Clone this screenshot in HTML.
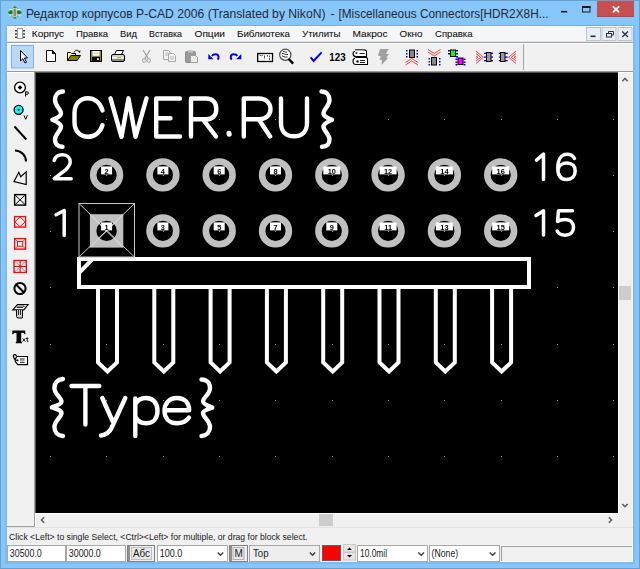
<!DOCTYPE html>
<html><head><meta charset="utf-8">
<style>
*{margin:0;padding:0}
html,body{width:640px;height:569px;overflow:hidden;background:#8cc7f7;font-family:"Liberation Sans",sans-serif}
.a{position:absolute}
</style></head><body>
<svg class="a" style="left:0;top:0" width="640" height="569" viewBox="0 0 640 569">
<rect x="0" y="0" width="640" height="569" fill="#87c6fa"/><rect x="5" y="26" width="2" height="538" fill="#7dbcf3"/><rect x="633" y="26" width="2" height="538" fill="#7dbcf3"/><rect x="5" y="562" width="630" height="2" fill="#7dbcf3"/>
<rect x="0.5" y="0.5" width="639" height="568" fill="none" stroke="#6a9ecf"/>
<rect x="7" y="25" width="626" height="1" fill="#78b0e3"/>
<path d="M14.9,5.9 L21.9,12.4 L14.9,18.9 L7.9,12.4 Z" fill="#0a8a0a"/>
<path d="M9.5,9.6 H20.3 M9.5,14.8 H20.3" stroke="#e8f8e0" stroke-width="1.2"/>
<rect x="13" y="8.3" width="3.7" height="8.5" fill="#8a8a8a" stroke="#f0d8f0" stroke-width="0.8"/>
<text x="26" y="17.5" font-size="12.4" font-family="Liberation Sans" fill="#1f2a36" textLength="299.5" lengthAdjust="spacingAndGlyphs">Редактор корпусов P-CAD 2006 (Translated by NikoN)</text>
<text x="330.5" y="17.5" font-size="12.4" font-family="Liberation Sans" fill="#1f2a36">-</text>
<text x="338.5" y="17.5" font-size="12.4" font-family="Liberation Sans" fill="#1f2a36" textLength="210" lengthAdjust="spacingAndGlyphs">[Miscellaneous Connectors[HDR2X8H...</text>
<rect x="561" y="10.9" width="6.2" height="1.6" fill="#1a1a1a"/>
<rect x="582.5" y="6.5" width="7.5" height="5.5" fill="none" stroke="#1a1a1a" stroke-width="1"/><rect x="582" y="6" width="8.5" height="2" fill="#1a1a1a"/>
<rect x="597" y="1" width="37" height="16" fill="#c74f4f"/><rect x="597" y="16" width="37" height="1" fill="#c04040"/>
<path d="M612.8,6.4 L619.2,12.4 M619.2,6.4 L612.8,12.4" stroke="#fff" stroke-width="1.7"/>
<rect x="7" y="26" width="626" height="536" fill="#f0f0f0"/>
<rect x="7" y="26" width="626" height="1" fill="#ffffff"/>
<rect x="7" y="27" width="626" height="14" fill="#f5f6f8"/>
<rect x="7" y="41" width="626" height="1" fill="#e4e5e8"/>
<rect x="17.5" y="28.5" width="5" height="10" fill="#fafafa" stroke="#9a9a9a"/>
<path d="M15,30h2v1.5h-2zM15,33.2h2v1.5h-2zM15,36.4h2v1.5h-2zM23,30h2v1.5h-2zM23,33.2h2v1.5h-2zM23,36.4h2v1.5h-2z" fill="#404040"/>
<text x="31.8" y="36.8" font-size="9.8" font-family="Liberation Sans" fill="#101010" stroke="#101010" stroke-width="0.08" textLength="32.3" lengthAdjust="spacingAndGlyphs">Корпус</text>
<text x="76" y="36.8" font-size="9.8" font-family="Liberation Sans" fill="#101010" stroke="#101010" stroke-width="0.08" textLength="32" lengthAdjust="spacingAndGlyphs">Правка</text>
<text x="120" y="36.8" font-size="9.8" font-family="Liberation Sans" fill="#101010" stroke="#101010" stroke-width="0.08" textLength="17" lengthAdjust="spacingAndGlyphs">Вид</text>
<text x="149" y="36.8" font-size="9.8" font-family="Liberation Sans" fill="#101010" stroke="#101010" stroke-width="0.08" textLength="33" lengthAdjust="spacingAndGlyphs">Вставка</text>
<text x="194.5" y="36.8" font-size="9.8" font-family="Liberation Sans" fill="#101010" stroke="#101010" stroke-width="0.08" textLength="30.5" lengthAdjust="spacingAndGlyphs">Опции</text>
<text x="237" y="36.8" font-size="9.8" font-family="Liberation Sans" fill="#101010" stroke="#101010" stroke-width="0.08" textLength="53" lengthAdjust="spacingAndGlyphs">Библиотека</text>
<text x="302" y="36.8" font-size="9.8" font-family="Liberation Sans" fill="#101010" stroke="#101010" stroke-width="0.08" textLength="38.5" lengthAdjust="spacingAndGlyphs">Утилиты</text>
<text x="352.5" y="36.8" font-size="9.8" font-family="Liberation Sans" fill="#101010" stroke="#101010" stroke-width="0.08" textLength="35" lengthAdjust="spacingAndGlyphs">Макрос</text>
<text x="399.5" y="36.8" font-size="9.8" font-family="Liberation Sans" fill="#101010" stroke="#101010" stroke-width="0.08" textLength="23" lengthAdjust="spacingAndGlyphs">Окно</text>
<text x="435" y="36.8" font-size="9.8" font-family="Liberation Sans" fill="#101010" stroke="#101010" stroke-width="0.08" textLength="37.5" lengthAdjust="spacingAndGlyphs">Справка</text>
<rect x="586.5" y="27.5" width="14" height="13" fill="#e6eef7" stroke="#bdc3ca"/>
<rect x="602" y="27.5" width="14" height="13" fill="#e6eef7" stroke="#bdc3ca"/>
<rect x="618" y="27.5" width="14" height="13" fill="#e6eef7" stroke="#bdc3ca"/>
<rect x="590.5" y="35.5" width="5" height="1.6" fill="#303030"/>
<rect x="606.5" y="33.5" width="5" height="3.5" fill="none" stroke="#303030"/><path d="M608.5,33 V31.5 H613.5 V35 H612" fill="none" stroke="#303030"/>
<path d="M622.2,31.6 L628,37 M628,31.6 L622.2,37" stroke="#303030" stroke-width="1.3"/>
<rect x="7" y="42" width="626" height="1" fill="#a0a0a0"/>
<rect x="7" y="43" width="626" height="1" fill="#ffffff"/>
<rect x="7" y="71" width="626" height="1" fill="#9a9a9a"/>
<rect x="523" y="44" width="1.5" height="26" fill="#a8a8a8"/><rect x="524.5" y="44" width="1" height="26" fill="#ffffff"/>
<rect x="11.5" y="45.5" width="22" height="22.5" fill="#b9d8f5" stroke="#7db3ea"/>
<path d="M20.5,50.5 V61 L22.8,58.8 L25,63 L26.5,62.2 L24.4,58 H27.5 Z" fill="#fff" stroke="#000" stroke-width="1"/>
<path d="M46.5,50.5 H52.5 L55.5,53.5 V61.5 H46.5 Z" fill="#fff" stroke="#000"/><path d="M52.5,50.5 V53.5 H55.5 Z" fill="#000" stroke="#000"/>
<path d="M67.5,60.5 V52.5 H70.5 L71.5,53.5 H75.5 V55.5" fill="#ffff80" stroke="#000"/>
<path d="M67.5,60.5 L70.8,55.5 H80.5 L77.2,60.5 Z" fill="#808000" stroke="#000"/>
<path d="M74,52.5 C75,50 78,49.5 79,51.5" fill="none" stroke="#000"/><path d="M78,51.5 L80.5,50.5 L80,53 Z" fill="#000"/>
<rect x="90" y="50" width="12" height="12" fill="#000"/><rect x="91" y="51" width="10" height="10" fill="#8a8a00"/><rect x="92.5" y="51" width="7" height="4.8" fill="#fff"/><rect x="93.5" y="52.5" width="5" height="1.8" fill="#d8d8d8"/><rect x="92" y="57" width="8" height="4" fill="#000"/><rect x="97" y="58.3" width="1.8" height="1.8" fill="#fff"/>
<path d="M114.5,54.5 L116.5,50.5 H123.5 L121.5,54.5 Z" fill="#fff" stroke="#000"/>
<rect x="111.5" y="54.5" width="13" height="7" rx="1.5" fill="#d0d0d0" stroke="#000"/>
<rect x="112" y="57" width="12" height="1.5" fill="#fff"/><rect x="117" y="57" width="4" height="1.5" fill="#c8c800"/><rect x="112" y="59.5" width="12" height="1" fill="#404040"/>
<path d="M143,50 L148.5,59 M150,50 L144.5,59" stroke="#a0a0a0" stroke-width="1.2"/><circle cx="144.3" cy="60.5" r="1.8" fill="none" stroke="#a0a0a0"/><circle cx="148.7" cy="60.5" r="1.8" fill="none" stroke="#a0a0a0"/>
<path d="M163.5,50.5 H168.5 L170,52 V59.5 H163.5 Z" fill="#f4f4f4" stroke="#a8a8a8"/><path d="M168.5,53.5 H173.5 L175.5,55.5 V61.5 H168.5 Z" fill="#f4f4f4" stroke="#a8a8a8"/><path d="M170,57h4M170,59h4M165,53h3M165,55h3" stroke="#b8b8b8"/>
<rect x="185.5" y="51.5" width="10" height="11" rx="1" fill="#9a9a9a" stroke="#8a8a8a"/><rect x="188" y="50" width="5" height="2.5" fill="#c8c8c8"/><path d="M190.5,55.5 H195.5 L197.5,57.5 V62.5 H190.5 Z" fill="#ececec" stroke="#9a9a9a"/>
<path d="M212,56 C213.5,53.8 217.8,53.5 218.5,56.5 C218.8,58 218.2,59 217.5,59.5" fill="none" stroke="#0000ff" stroke-width="2"/><path d="M208.3,54 L208.3,59.3 L213.5,59.3 Z" fill="#0000ff"/>
<path d="M237.3,56 C235.8,53.8 231.5,53.5 230.8,56.5 C230.5,58 231.1,59 231.8,59.5" fill="none" stroke="#0000ff" stroke-width="2"/><path d="M241.3,54 L241.3,59.3 L236.1,59.3 Z" fill="#0000ff"/>
<rect x="257.7" y="53.5" width="14.8" height="8" fill="#fff" stroke="#000" stroke-width="1.3"/><path d="M259.5,55 L261.5,55.8 L263,55 M264.5,55.5v3 M267.5,55v1.5 M269.5,55.5v1.5 M270,57.5 L269,59 L270,60" fill="none" stroke="#404040" stroke-width="0.9"/>
<circle cx="285.3" cy="54.8" r="5.6" fill="#fff" stroke="#484848" stroke-width="1.2"/><path d="M283.2,51.5 C284.5,51 285.5,52.5 287,52.2 M282,53.5 C283.5,53 284.5,55 288,54.5 M282,55.8 C283.5,56 284,57.5 287.5,57" fill="none" stroke="#303030" stroke-width="1"/><path d="M288.6,58.8 L293.2,63.6" stroke="#000" stroke-width="2.4"/>
<path d="M310.6,57.3 L313.6,61 L321.6,52.4" fill="none" stroke="#0000ff" stroke-width="2"/>
<text x="329.3" y="60.6" font-size="10.6" font-weight="bold" font-family="Liberation Sans" fill="#000" textLength="16.3" lengthAdjust="spacingAndGlyphs">123</text>
<path d="M355.5,49.5 H364.5 L366.5,51 V56.5 H356 C354,56.5 353,55 353,53.5 C353,52 354,51.5 355,51.5" fill="#fff" stroke="#000" stroke-width="1.1"/><rect x="355" y="49" width="10" height="1.5" fill="#505050"/>
<path d="M356,57.5 H366.5 L367.5,58.5 V64.5 H356 C354,64.5 353,63 353,61 C353,59.5 354,58.5 355,58.5" fill="#fff" stroke="#000" stroke-width="1.1"/>
<path d="M359.5,53.5h5 M360,60.5h5 M360,62.5h5" stroke="#202020" stroke-width="1"/><circle cx="356.5" cy="53" r="1" fill="#303030"/><circle cx="357.5" cy="61.5" r="1.3" fill="#202020"/><path d="M354,56.5 C355,57 356,57.5 358,57.5" fill="none" stroke="#000" stroke-width="1"/>
<path d="M380.2,49.1 L388.9,49.1 L385.8,53.5 L388.9,54.2 L386.3,57.6 L388.2,58 L381.5,65 L382,60.2 L379.4,59.6 L381,56.6 L377.9,55.4 Z" fill="#a0a0a0"/>
<rect x="409.5" y="50" width="5" height="7.5" fill="#888" stroke="#000"/>
<path d="M406,50h1.5v1.5h-1.5zM406,53h1.5v1.5h-1.5zM406,56h1.5v1.5h-1.5zM416.5,50h1.5v1.5h-1.5zM416.5,53h1.5v1.5h-1.5zM416.5,56h1.5v1.5h-1.5z" fill="#0000ff"/>
<path d="M405.5,62.5 L411.8,58.5 L418,62.5 M405.5,65 L411.8,61 L418,65" fill="none" stroke="#ff4040" stroke-width="1"/>
<path d="M428,49.5 L434.2,53.5 L440.5,49.5 M428,52 L434.2,56 L440.5,52" fill="none" stroke="#ff4040" stroke-width="1"/>
<rect x="431.5" y="57.5" width="5" height="7.5" fill="#888" stroke="#000"/>
<path d="M428.5,58h1.5v1.5h-1.5zM428.5,61h1.5v1.5h-1.5zM428.5,64h1.5v1.5h-1.5zM439,58h1.5v1.5h-1.5zM439,61h1.5v1.5h-1.5zM439,64h1.5v1.5h-1.5z" fill="#0000ff"/>
<rect x="450.5" y="50" width="5" height="6.5" fill="#00ff00" stroke="#000"/><path d="M448,50h2v1.5h-2zM448,53h2v1.5h-2zM456,50h2v1.5h-2zM456,53h2v1.5h-2zM456,56h2v1.5h-2z" fill="#0000ff"/>
<rect x="458" y="58" width="5" height="6.5" fill="#ff00ff" stroke="#000"/><path d="M455.5,58.5h2v1.5h-2zM455.5,61.5h2v1.5h-2zM455.5,64h2v1.5h-2zM463.5,58.5h2v1.5h-2zM463.5,61.5h2v1.5h-2zM463.5,64h2v1.5h-2z" fill="#0000ff"/>
<path d="M476,51 L483.4,57.3 L476,63.5 M476,53.5 L480.8,57.3 L476,61 M476,56 L478,57.3 L476,58.5" fill="none" stroke="#ff4040" stroke-width="1"/>
<path d="M484,52.8h9v1.3h-9zM484,56.5h9v1.3h-9zM484,60h9v1.3h-9z" fill="#0000ff"/><rect x="486.5" y="52.5" width="4.5" height="9" fill="#999" stroke="#000"/>
<path d="M498.8,52.8h9v1.3h-9zM498.8,56.5h9v1.3h-9zM498.8,60h9v1.3h-9z" fill="#0000ff"/><rect x="500.5" y="52.5" width="4.5" height="9" fill="#999" stroke="#000"/>
<path d="M516,51 L508.6,57.3 L516,63.5 M516,53.5 L511.2,57.3 L516,61 M516,56 L514,57.3 L516,58.5" fill="none" stroke="#ff4040" stroke-width="1"/>
<rect x="7" y="72" width="27" height="1" fill="#fff"/>
<circle cx="20" cy="87.5" r="5.4" fill="#fff" stroke="#000" stroke-width="1.3"/><path d="M20,85.2 L22.3,87.5 L20,89.8 L17.7,87.5 Z" fill="#000"/>
<path d="M25.6,96.5 V91.8 H27 Q28.4,91.8 28.4,93 Q28.4,94.3 27,94.3 H25.6" fill="none" stroke="#000" stroke-width="1"/>
<circle cx="18.6" cy="109.8" r="4.5" fill="#00ffff" stroke="#000" stroke-width="1.3"/><circle cx="18.6" cy="109.8" r="1.1" fill="#000"/>
<path d="M24,115.3 L25.7,119.3 L27.4,115.3" fill="none" stroke="#000" stroke-width="1"/>
<path d="M14.5,126.5 L26.3,139.5" stroke="#000" stroke-width="2"/>
<path d="M15,150.6 A11,11 0 0 1 26,161.6" fill="none" stroke="#000" stroke-width="2"/>
<path d="M14,181.5 L18.8,172.3 L20.7,176.7 L26.2,171.8 V184.5 Z" fill="none" stroke="#000" stroke-width="1.2"/>
<rect x="14.6" y="194.6" width="11" height="10.5" fill="none" stroke="#000" stroke-width="1.4"/><path d="M14.6,194.6 L25.6,205.1 M25.6,194.6 L14.6,205.1" stroke="#000" stroke-width="1"/>
<rect x="14.6" y="216.6" width="11" height="10.5" fill="none" stroke="#ee1010" stroke-width="1.4"/><path d="M20.1,217 L25.2,221.9 L20.1,226.7 L15,221.9 Z" fill="none" stroke="#ee1010"/>
<rect x="14.6" y="238.6" width="11" height="10.5" fill="none" stroke="#ee1010" stroke-width="1.4"/><rect x="17.5" y="241.5" width="5.2" height="4.8" fill="none" stroke="#ee1010"/><path d="M14.6,238.6 L17.5,241.5 M25.6,238.6 L22.7,241.5 M14.6,249.1 L17.5,246.3 M25.6,249.1 L22.7,246.3" stroke="#ee1010" stroke-width="0.8"/>
<rect x="14" y="260.5" width="12.3" height="12" fill="none" stroke="#ee1010" stroke-width="1.4"/><path d="M20.1,260.5 V272.5 M14,266.5 H26.3" stroke="#ee1010" stroke-width="1.2"/><path d="M14,260.5 L26.3,272.5 M26.3,260.5 L14,272.5" stroke="#ee1010" stroke-width="0.6"/>
<circle cx="20" cy="288.5" r="5.6" fill="none" stroke="#000" stroke-width="2"/><path d="M16,284.5 L24,292.5" stroke="#000" stroke-width="2.2"/>
<path d="M12.8,309.8 L17.5,304.5 H28 L23.8,309.8 Z" fill="#fff" stroke="#000" stroke-width="1.2"/><path d="M17,307.5 L18.5,306 H24.5 L23,307.5 Z" fill="none" stroke="#000" stroke-width="0.8"/>
<path d="M16.5,310 V316.5 Q16.5,318 18.5,318 H22.5 V310" fill="#d0d0d0" stroke="#000" stroke-width="1"/><path d="M18.5,310v5M20.5,310v5" stroke="#000" stroke-width="0.8"/>
<path d="M12.3,330.5 H25 L25.5,334.2 H24.8 Q24,332.8 21.2,332.8 V341.6 L22,342.4 V343.2 H15.7 V342.4 L16.5,341.6 V332.8 Q13.8,332.8 13,334.2 H12.2 Z" fill="#000"/>
<path d="M22.7,338.4 L25.2,341.6 M25.2,338.4 L22.7,341.6 M25.9,338.5 H28.4 M27.2,337.3 V341.6 H28.4" fill="none" stroke="#202020" stroke-width="1"/>
<path d="M17,356.5 H27.5 V364.6 H17.8 L15.2,361.5 V359 Z" fill="#fff" stroke="#000" stroke-width="1.1"/>
<path d="M17.6,360.4 C15.2,360.8 13,357.5 13.5,355.6 C14,354.1 15.6,354.2 16.6,356.2" fill="none" stroke="#000" stroke-width="1.3"/><circle cx="17.6" cy="360.4" r="0.9" fill="#000"/>
<rect x="20" y="358" width="4.6" height="2.8" fill="#8a8a8a"/><path d="M20,362.3 H24.6" stroke="#000" stroke-width="0.9"/>
<rect x="7" y="526" width="28" height="1" fill="#a0a0a0"/>
<rect x="34" y="71" width="1" height="456" fill="#a0a0a0"/>
<rect x="35" y="72" width="1" height="441" fill="#505050"/>
<rect x="35" y="72" width="583" height="1" fill="#505050"/>
<rect x="618" y="72" width="1" height="441" fill="#ffffff"/>
<rect x="619" y="73" width="13" height="440" fill="#f0f0f0"/>
<rect x="618" y="72" width="14" height="1" fill="#ffffff"/><rect x="632" y="72" width="1" height="490" fill="#fbfbfb"/>
<path d="M622.3,81.2 L625,78.5 L627.7,81.2" fill="none" stroke="#606060" stroke-width="1.6"/>
<path d="M622.3,504 L625,506.7 L627.7,504" fill="none" stroke="#606060" stroke-width="1.6"/>
<rect x="619" y="286" width="12" height="14" fill="#cdcdcd"/>
<rect x="35" y="513" width="584" height="1" fill="#ffffff"/><rect x="35" y="513" width="1" height="14" fill="#ffffff"/>
<rect x="36" y="514" width="582" height="13" fill="#f0f0f0"/>
<path d="M44.2,517.3 L41.5,520 L44.2,522.7" fill="none" stroke="#606060" stroke-width="1.6"/>
<path d="M608.8,517.3 L611.5,520 L608.8,522.7" fill="none" stroke="#606060" stroke-width="1.6"/>
<rect x="319" y="514" width="14" height="12" fill="#cdcdcd"/>
<rect x="7" y="527" width="626" height="1" fill="#e2e2e2"/>
<text x="9" y="539.5" font-size="9.6" font-family="Liberation Sans" fill="#1a1a1a" textLength="298.5" lengthAdjust="spacingAndGlyphs">Click &lt;Left&gt; to single Select, &lt;Ctrl&gt;&lt;Left&gt; for multiple, or drag for block select.</text>
<rect x="7" y="545" width="626" height="1" fill="#f8f8f8"/>
<rect x="7.5" y="545.5" width="58" height="16" fill="#fff" stroke="#a8a8a8"/>
<rect x="66.5" y="545.5" width="59" height="16" fill="#fff" stroke="#a8a8a8"/>
<text x="9.8" y="556.6" font-size="10" font-family="Liberation Sans" fill="#1a1a1a" textLength="32" lengthAdjust="spacingAndGlyphs">30500.0</text>
<text x="68.8" y="556.6" font-size="10" font-family="Liberation Sans" fill="#1a1a1a" textLength="32" lengthAdjust="spacingAndGlyphs">30000.0</text>
<rect x="127.5" y="545.5" width="27" height="16" fill="#f0f0f0" stroke="#808080" stroke-width="1"/><rect x="128" y="546" width="2" height="15" fill="#909090"/>
<rect x="131.5" y="547.5" width="20" height="12" fill="#e8e8e8" stroke="#c0c0c0"/>
<text x="133" y="557" font-size="10" font-family="Liberation Sans" fill="#1a1a1a" textLength="17" lengthAdjust="spacingAndGlyphs">Абс</text>
<rect x="157.5" y="545.5" width="70" height="16" fill="#fff" stroke="#a8a8a8"/>
<text x="159.8" y="556.6" font-size="10" font-family="Liberation Sans" fill="#1a1a1a" textLength="22.5" lengthAdjust="spacingAndGlyphs">100.0</text>
<path d="M217.8,552.5 L220.5,555.2 L223.2,552.5" fill="none" stroke="#404040" stroke-width="1.5"/>
<rect x="229.5" y="545.5" width="18" height="16" fill="#f0f0f0" stroke="#808080"/><rect x="230" y="546" width="2" height="15" fill="#909090"/><rect x="233" y="547.5" width="11" height="12" fill="#e8e8e8" stroke="#b0b0b0"/>
<text x="234.5" y="557" font-size="10" font-family="Liberation Sans" fill="#1a1a1a">M</text>
<rect x="249.5" y="545.5" width="70" height="16" fill="#eeeeee" stroke="#a8a8a8"/>
<text x="253" y="556.6" font-size="10" font-family="Liberation Sans" fill="#1a1a1a" textLength="15.5" lengthAdjust="spacingAndGlyphs">Top</text>
<path d="M309.8,552.5 L312.5,555.2 L315.2,552.5" fill="none" stroke="#404040" stroke-width="1.5"/>
<rect x="322.5" y="545.5" width="18" height="15" fill="#ff0000" stroke="#606060"/>
<rect x="343.5" y="544.5" width="12" height="7.5" fill="#e6e6e6" stroke="#c8c8c8"/><rect x="343.5" y="552.5" width="12" height="7.5" fill="#e6e6e6" stroke="#c8c8c8"/>
<path d="M347,550 L349.5,547.5 L352,550 Z M347,555 L349.5,557.5 L352,555 Z" fill="#000"/>
<rect x="357.5" y="545.5" width="70" height="16" fill="#fff" stroke="#a8a8a8"/>
<text x="360" y="556.6" font-size="10" font-family="Liberation Sans" fill="#1a1a1a" textLength="27" lengthAdjust="spacingAndGlyphs">10.0mil</text>
<path d="M418.3,552.5 L421.2,555.2 L424,552.5" fill="none" stroke="#404040" stroke-width="1.5"/>
<rect x="429.5" y="545.5" width="70" height="16" fill="#fff" stroke="#a8a8a8"/>
<text x="431.6" y="556.6" font-size="10" font-family="Liberation Sans" fill="#1a1a1a" textLength="26.5" lengthAdjust="spacingAndGlyphs">(None)</text>
<path d="M489.8,552.5 L492.7,555.2 L495.5,552.5" fill="none" stroke="#404040" stroke-width="1.5"/>
<rect x="501" y="546" width="132" height="16" fill="#f0f0f0"/><rect x="501" y="546" width="131" height="1" fill="#a0a0a0"/><rect x="501" y="546" width="1" height="15" fill="#a0a0a0"/><rect x="632" y="546" width="1" height="16" fill="#ffffff"/><rect x="501" y="561" width="132" height="1" fill="#ffffff"/>
</svg>
<svg class="a" style="left:0;top:0;will-change:transform" width="640" height="569" viewBox="0 0 640 569">
<defs><clipPath id="cc"><rect x="36" y="73" width="582" height="440"/></clipPath></defs>
<rect x="36" y="73" width="582" height="440" fill="#000"/>
<g clip-path="url(#cc)">
<circle cx="106.6" cy="174.9" r="13.4" fill="none" stroke="#c0c0c0" stroke-width="6.6"/>
<rect x="89.9" y="214.2" width="33.4" height="33.4" fill="#c0c0c0"/>
<circle cx="106.6" cy="230.9" r="10.2" fill="#000"/>
<circle cx="162.9" cy="174.9" r="13.4" fill="none" stroke="#c0c0c0" stroke-width="6.6"/>
<circle cx="162.9" cy="230.9" r="13.4" fill="none" stroke="#c0c0c0" stroke-width="6.6"/>
<circle cx="219.2" cy="174.9" r="13.4" fill="none" stroke="#c0c0c0" stroke-width="6.6"/>
<circle cx="219.2" cy="230.9" r="13.4" fill="none" stroke="#c0c0c0" stroke-width="6.6"/>
<circle cx="275.5" cy="174.9" r="13.4" fill="none" stroke="#c0c0c0" stroke-width="6.6"/>
<circle cx="275.5" cy="230.9" r="13.4" fill="none" stroke="#c0c0c0" stroke-width="6.6"/>
<circle cx="331.8" cy="174.9" r="13.4" fill="none" stroke="#c0c0c0" stroke-width="6.6"/>
<circle cx="331.8" cy="230.9" r="13.4" fill="none" stroke="#c0c0c0" stroke-width="6.6"/>
<circle cx="388.1" cy="174.9" r="13.4" fill="none" stroke="#c0c0c0" stroke-width="6.6"/>
<circle cx="388.1" cy="230.9" r="13.4" fill="none" stroke="#c0c0c0" stroke-width="6.6"/>
<circle cx="444.4" cy="174.9" r="13.4" fill="none" stroke="#c0c0c0" stroke-width="6.6"/>
<circle cx="444.4" cy="230.9" r="13.4" fill="none" stroke="#c0c0c0" stroke-width="6.6"/>
<circle cx="500.7" cy="174.9" r="13.4" fill="none" stroke="#c0c0c0" stroke-width="6.6"/>
<circle cx="500.7" cy="230.9" r="13.4" fill="none" stroke="#c0c0c0" stroke-width="6.6"/>
<path fill="#9a9a9a" d="M50 119h1v1h-1zM106 119h1v1h-1zM163 119h1v1h-1zM219 119h1v1h-1zM275 119h1v1h-1zM332 119h1v1h-1zM388 119h1v1h-1zM444 119h1v1h-1zM501 119h1v1h-1zM557 119h1v1h-1zM613 119h1v1h-1zM50 175h1v1h-1zM106 175h1v1h-1zM163 175h1v1h-1zM219 175h1v1h-1zM275 175h1v1h-1zM332 175h1v1h-1zM388 175h1v1h-1zM444 175h1v1h-1zM501 175h1v1h-1zM557 175h1v1h-1zM613 175h1v1h-1zM50 231h1v1h-1zM106 231h1v1h-1zM163 231h1v1h-1zM219 231h1v1h-1zM275 231h1v1h-1zM332 231h1v1h-1zM388 231h1v1h-1zM444 231h1v1h-1zM501 231h1v1h-1zM557 231h1v1h-1zM613 231h1v1h-1zM50 287h1v1h-1zM106 287h1v1h-1zM163 287h1v1h-1zM219 287h1v1h-1zM275 287h1v1h-1zM332 287h1v1h-1zM388 287h1v1h-1zM444 287h1v1h-1zM501 287h1v1h-1zM557 287h1v1h-1zM613 287h1v1h-1zM50 344h1v1h-1zM106 344h1v1h-1zM163 344h1v1h-1zM219 344h1v1h-1zM275 344h1v1h-1zM332 344h1v1h-1zM388 344h1v1h-1zM444 344h1v1h-1zM501 344h1v1h-1zM557 344h1v1h-1zM613 344h1v1h-1zM50 400h1v1h-1zM106 400h1v1h-1zM163 400h1v1h-1zM219 400h1v1h-1zM275 400h1v1h-1zM332 400h1v1h-1zM388 400h1v1h-1zM444 400h1v1h-1zM501 400h1v1h-1zM557 400h1v1h-1zM613 400h1v1h-1zM50 456h1v1h-1zM106 456h1v1h-1zM163 456h1v1h-1zM219 456h1v1h-1zM275 456h1v1h-1zM332 456h1v1h-1zM388 456h1v1h-1zM444 456h1v1h-1zM501 456h1v1h-1zM557 456h1v1h-1zM613 456h1v1h-1z"/>
<path fill="none" stroke="#fff" stroke-linecap="round" stroke-linejoin="round" stroke-width="4.4" d="M63,91.5 C58,91.5 55,95 55,100 C55,106 61,109 61,113.5 C61,116.5 56,118.5 52.5,119.8 C56,121.5 61,123.5 61,126.5 C61,131 55,134 55,139.5 C55,144 58,146.5 62.5,146.8"/>
<path fill="none" stroke="#fff" stroke-linecap="round" stroke-linejoin="round" stroke-width="4.4" d="M321.5,91.5 C326.5,91.5 329.5,95 329.5,100 C329.5,106 323.5,109 323.5,113.5 C323.5,116.5 328.5,118.5 332,119.8 C328.5,121.5 323.5,123.5 323.5,126.5 C323.5,131 329.5,134 329.5,139.5 C329.5,144 326.5,146.5 322,146.8"/>
<path fill="none" stroke="#fff" stroke-linecap="round" stroke-linejoin="round" stroke-width="4.4" d="M102.5,110.5 C100,102 94,98.3 88,98.3 C80,98.3 74.5,104 74.5,113 V122 C74.5,131 80,136.8 88,136.8 C94,136.8 100,133 102.5,125"/>
<path fill="none" stroke="#fff" stroke-linecap="round" stroke-linejoin="round" stroke-width="4.4" d="M110.5,98.3 L121.5,136.8 L128.5,98.3 L135.5,136.8 L146.5,98.3"/>
<path fill="none" stroke="#fff" stroke-linecap="round" stroke-linejoin="round" stroke-width="4.4" d="M180,98.5 H156.2 V136.5 H180 M156.2,118.2 H170.5"/>
<path fill="none" stroke="#fff" stroke-linecap="round" stroke-linejoin="round" stroke-width="4.4" d="M191,136.5 V98.5 H206 C213,98.5 216.3,103 216.3,109 C216.3,115 213,119.3 206,119.3 H191 M203,119.3 L216,136.5"/>
<path fill="none" stroke="#fff" stroke-linecap="round" stroke-linejoin="round" stroke-width="5" d="M229,133.2 L229.2,134.2"/>
<path fill="none" stroke="#fff" stroke-linecap="round" stroke-linejoin="round" stroke-width="4.4" d="M243.8,136.5 V98.5 H259 C266,98.5 270.5,103 270.5,109 C270.5,115 266,119.3 259,119.3 H243.8 M258.7,119.3 L270.1,136.5"/>
<path fill="none" stroke="#fff" stroke-linecap="round" stroke-linejoin="round" stroke-width="4.4" d="M281,98.5 V123 C281,131.5 286,136.3 294,136.3 C302,136.3 307,131.5 307,123 V98.5"/>
<path fill="none" stroke="#fff" stroke-linecap="round" stroke-linejoin="round" stroke-width="3.5" d="M54.2,160.4 C55.5,156 58.5,154.8 62.5,154.8 C67.5,154.8 70.2,158 70.2,162 C70.2,165 68,167.5 65.5,170 L54.2,178.7 H71.2"/>
<path fill="none" stroke="#fff" stroke-linecap="round" stroke-linejoin="round" stroke-width="3.5" d="M56,214.8 L64.2,210.5 V235.5"/>
<path fill="none" stroke="#fff" stroke-linecap="round" stroke-linejoin="round" stroke-width="3.5" d="M536.5,160.2 L543.5,154.2 V179.5"/>
<path fill="none" stroke="#fff" stroke-linecap="round" stroke-linejoin="round" stroke-width="3.5" d="M574.5,158.5 C573,155.5 570,154.2 567,154.2 C561,154.2 557.8,160 557.8,168 C557.8,175.5 561,179.5 566.5,179.5 C572,179.5 575.2,176 575.2,171 C575.2,166 572,163 567,163 C562,163 558.5,166 558,170"/>
<path fill="none" stroke="#fff" stroke-linecap="round" stroke-linejoin="round" stroke-width="3.5" d="M536,215.5 L543.5,210.8 V235"/>
<path fill="none" stroke="#fff" stroke-linecap="round" stroke-linejoin="round" stroke-width="3.5" d="M572.5,210.8 H558.5 L557.5,221.5 C559.5,220 562.5,219.5 565,219.5 C570.5,219.5 573.5,223 573.5,227.5 C573.5,232 570.5,235.2 565,235.2 C561.5,235.2 558.5,233.5 557.2,231"/>
<path fill="none" stroke="#fff" stroke-linecap="round" stroke-linejoin="round" stroke-width="4.4" d="M62.9,379 C57.5,379.5 54.4,383 54.4,388 C54.4,394.5 61.5,397.5 61.5,401.5 C61.5,404 56,406 51.8,407.3 C56,408.8 61.5,410.5 61.5,413 C61.5,417.5 54.4,420.5 54.4,427 C54.4,432 57.5,435.5 62.9,436"/>
<path fill="none" stroke="#fff" stroke-linecap="round" stroke-linejoin="round" stroke-width="4.4" d="M201.5,379.5 C206.5,379.5 210,383 210,388 C210,394.5 203,397.5 203,401.5 C203,404 208.5,406 212.3,407.6 C208.5,409 203,410.5 203,413 C203,417.5 210,420.5 210,427 C210,432 206.5,435.5 201.5,436"/>
<path fill="none" stroke="#fff" stroke-linecap="round" stroke-linejoin="round" stroke-width="4.4" d="M71.5,386 H99.3 M85.4,386 V424.5"/>
<path fill="none" stroke="#fff" stroke-linecap="round" stroke-linejoin="round" stroke-width="4.4" d="M102.3,398 L112.5,421 M125.3,398 L112,427 C110,431.5 106,435 101,435.5"/>
<path fill="none" stroke="#fff" stroke-linecap="round" stroke-linejoin="round" stroke-width="4.4" d="M135.3,398.5 V436 M135.5,404 C137.5,400 141.5,398 146,398 C153,398 157.5,403 157.5,410.7 C157.5,418.5 153,423.3 146,423.3 C141.5,423.3 137.5,421 135.5,417"/>
<path fill="none" stroke="#fff" stroke-linecap="round" stroke-linejoin="round" stroke-width="4.4" d="M164.5,410.2 H189.2 C189.2,402.5 184.5,398 177,398 C169,398 164.5,403.5 164.5,410.7 C164.5,418 169,423.3 177,423.3 C182.5,423.3 186.5,421 189,417.5"/>
<g fill="none" stroke="#fff" stroke-width="4" stroke-linejoin="miter">
<rect x="79" y="259" width="450" height="28"/>
<path stroke-linecap="square" d="M91.5,260 L80,272"/>
<path d="M98.0,289 V362.5 L107.5,371.5 L117.0,362.5 V289 M154.3,289 V362.5 L163.8,371.5 L173.3,362.5 V289 M210.6,289 V362.5 L220.1,371.5 L229.6,362.5 V289 M266.9,289 V362.5 L276.4,371.5 L285.9,362.5 V289 M323.2,289 V362.5 L332.7,371.5 L342.2,362.5 V289 M379.5,289 V362.5 L389.0,371.5 L398.5,362.5 V289 M435.8,289 V362.5 L445.3,371.5 L454.8,362.5 V289 M492.1,289 V362.5 L501.6,371.5 L511.1,362.5 V289"/>
</g>
<g fill="none" stroke="#c8c8c8" stroke-width="1">
<rect x="79" y="203.5" width="55.5" height="53.5"/>
<path d="M79,203.5 L134.5,257 M134.5,203.5 L79,257"/>
</g>
<path fill="none" stroke="#e0e0e0" stroke-width="1" d="M90,214.5 L123,247.5 M123,214.5 L90,247.5"/>
<rect x="101.1" y="166.4" width="11" height="8" fill="#fff"/>
<text x="106.6" y="173.6" text-anchor="middle" font-size="7.4" font-weight="bold" font-family="Liberation Sans" fill="#000">2</text>
<rect x="101.1" y="222.4" width="11" height="8" fill="#fff"/>
<text x="106.6" y="229.6" text-anchor="middle" font-size="7.4" font-weight="bold" font-family="Liberation Sans" fill="#000">1</text>
<rect x="157.4" y="166.4" width="11" height="8" fill="#fff"/>
<text x="162.9" y="173.6" text-anchor="middle" font-size="7.4" font-weight="bold" font-family="Liberation Sans" fill="#000">4</text>
<rect x="157.4" y="222.4" width="11" height="8" fill="#fff"/>
<text x="162.9" y="229.6" text-anchor="middle" font-size="7.4" font-weight="bold" font-family="Liberation Sans" fill="#000">3</text>
<rect x="213.7" y="166.4" width="11" height="8" fill="#fff"/>
<text x="219.2" y="173.6" text-anchor="middle" font-size="7.4" font-weight="bold" font-family="Liberation Sans" fill="#000">6</text>
<rect x="213.7" y="222.4" width="11" height="8" fill="#fff"/>
<text x="219.2" y="229.6" text-anchor="middle" font-size="7.4" font-weight="bold" font-family="Liberation Sans" fill="#000">5</text>
<rect x="270.0" y="166.4" width="11" height="8" fill="#fff"/>
<text x="275.5" y="173.6" text-anchor="middle" font-size="7.4" font-weight="bold" font-family="Liberation Sans" fill="#000">8</text>
<rect x="270.0" y="222.4" width="11" height="8" fill="#fff"/>
<text x="275.5" y="229.6" text-anchor="middle" font-size="7.4" font-weight="bold" font-family="Liberation Sans" fill="#000">7</text>
<rect x="323.3" y="166.4" width="17" height="8" fill="#fff"/>
<text x="331.8" y="173.6" text-anchor="middle" font-size="7.4" font-weight="bold" font-family="Liberation Sans" fill="#000">10</text>
<rect x="326.3" y="222.4" width="11" height="8" fill="#fff"/>
<text x="331.8" y="229.6" text-anchor="middle" font-size="7.4" font-weight="bold" font-family="Liberation Sans" fill="#000">9</text>
<rect x="379.6" y="166.4" width="17" height="8" fill="#fff"/>
<text x="388.1" y="173.6" text-anchor="middle" font-size="7.4" font-weight="bold" font-family="Liberation Sans" fill="#000">12</text>
<rect x="379.6" y="222.4" width="17" height="8" fill="#fff"/>
<text x="388.1" y="229.6" text-anchor="middle" font-size="7.4" font-weight="bold" font-family="Liberation Sans" fill="#000">11</text>
<rect x="435.9" y="166.4" width="17" height="8" fill="#fff"/>
<text x="444.4" y="173.6" text-anchor="middle" font-size="7.4" font-weight="bold" font-family="Liberation Sans" fill="#000">14</text>
<rect x="435.9" y="222.4" width="17" height="8" fill="#fff"/>
<text x="444.4" y="229.6" text-anchor="middle" font-size="7.4" font-weight="bold" font-family="Liberation Sans" fill="#000">13</text>
<rect x="492.2" y="166.4" width="17" height="8" fill="#fff"/>
<text x="500.7" y="173.6" text-anchor="middle" font-size="7.4" font-weight="bold" font-family="Liberation Sans" fill="#000">16</text>
<rect x="492.2" y="222.4" width="17" height="8" fill="#fff"/>
<text x="500.7" y="229.6" text-anchor="middle" font-size="7.4" font-weight="bold" font-family="Liberation Sans" fill="#000">15</text>
</g></svg>
</body></html>
